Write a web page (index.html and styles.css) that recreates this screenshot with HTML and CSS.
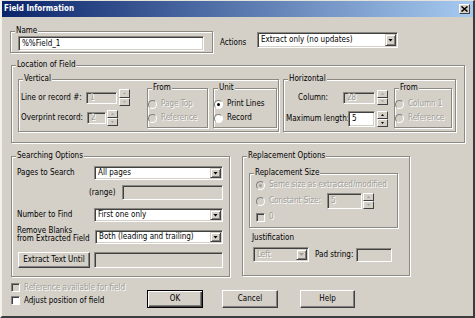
FILE: index.html
```html
<!DOCTYPE html>
<html>
<head>
<meta charset="utf-8">
<link rel="stylesheet" href="styles.css">
</head>
<body>
<div class="window">
  <div class="titlebar">
    <span class="title">Field Information</span>
    <span class="xbtn"><svg width="7" height="6" viewBox="0 0 7 6"><path d="M0.5 0.5L6.5 5.5M6.5 0.5L0.5 5.5" stroke="#000" stroke-width="1.5"/></svg></span>
  </div>
  <div class="client">
    <div class="row-top">
      <div class="grp g-name">
        <span class="cap">Name</span>
        <div class="edit e-name">%%Field_1</div>
      </div>
      <div class="actions">
        <span class="l-actions">Actions</span>
        <div class="combo c-actions"><span class="ctext">Extract only (no updates)</span><span class="dd"><i class="tri"></i></span></div>
      </div>
    </div>

    <div class="grp g-loc">
      <span class="cap">Location of Field</span>
      <div class="grp g-vert">
        <span class="cap">Vertical</span>
        <div class="vcol">
          <div class="frow va">
            <span class="lbl w65">Line or record #:</span>
            <div class="edit dis w31">1</div>
            <div class="spin ml2"><span><i class="up dis"></i></span><span><i class="dn dis"></i></span></div>
          </div>
          <div class="frow vb">
            <span class="lbl w66">Overprint record:</span>
            <div class="edit dis w19">2</div>
            <div class="spin ml1"><span><i class="up dis"></i></span><span><i class="dn dis"></i></span></div>
          </div>
        </div>
        <div class="grp g-from-v">
          <span class="cap">From</span>
          <div class="radio r1 dtext"><span class="rb off"></span>Page Top</div>
          <div class="radio r2 dtext"><span class="rb off"></span>Reference</div>
        </div>
        <div class="grp g-unit">
          <span class="cap">Unit</span>
          <div class="radio r1"><span class="rb"><i class="dot"></i></span>Print Lines</div>
          <div class="radio r2"><span class="rb"></span>Record</div>
        </div>
      </div>
      <div class="grp g-horiz">
        <span class="cap">Horizontal</span>
        <div class="hcol">
          <div class="frow ha">
            <span class="lbl l-col">Column:</span>
            <div class="edit dis w32">28</div>
            <div class="spin ml2"><span><i class="up dis"></i></span><span><i class="dn dis"></i></span></div>
          </div>
          <div class="frow hb">
            <span class="lbl l-max">Maximum length:</span>
            <div class="edit w27">5</div>
            <div class="spin ml2"><span><i class="up"></i></span><span><i class="dn"></i></span></div>
          </div>
        </div>
        <div class="grp g-from-h">
          <span class="cap">From</span>
          <div class="radio r1 dtext"><span class="rb off"></span>Column 1</div>
          <div class="radio r2 dtext"><span class="rb off"></span>Reference</div>
        </div>
      </div>
    </div>

    <div class="row-bot">
      <div class="grp g-search">
        <span class="cap">Searching Options</span>
        <div class="frow s1">
          <span class="lbl l-s">Pages to Search</span>
          <div class="combo w129"><span class="ctext">All pages</span><span class="dd"><i class="tri"></i></span></div>
        </div>
        <div class="frow s2">
          <span class="lbl l-range">(range)</span>
          <div class="edit dis w101"></div>
        </div>
        <div class="frow s3">
          <span class="lbl l-s">Number to Find</span>
          <div class="combo w129"><span class="ctext">First one only</span><span class="dd"><i class="tri"></i></span></div>
        </div>
        <div class="frow s4">
          <span class="lbl l-blank">Remove Blanks<br>from Extracted Field</span>
          <div class="combo w128"><span class="ctext">Both (leading and trailing)</span><span class="dd"><i class="tri"></i></span></div>
        </div>
        <div class="frow s5">
          <div class="btn b-extract">Extract Text Until</div>
          <div class="edit dis w129 ml4"></div>
        </div>
      </div>

      <div class="grp g-repl">
        <span class="cap">Replacement Options</span>
        <div class="grp g-rsize">
          <span class="cap">Replacement Size</span>
          <div class="radio rr1 dtext"><span class="rb off"><i class="dot gray"></i></span>Same size as extracted/modified</div>
          <div class="frow rr2">
            <div class="radio rc dtext"><span class="rb off"></span>Constant Size:</div>
            <div class="edit dis w35">5</div>
            <div class="spin ml1"><span><i class="up dis"></i></span><span><i class="dn dis"></i></span></div>
          </div>
          <div class="radio rr3 dtext"><span class="cb off"></span>0</div>
        </div>
        <div class="l-just">Justification</div>
        <div class="frow jr">
          <div class="combo dis w56"><span class="ctext">Left</span><span class="dd"><i class="tri dis"></i></span></div>
          <span class="lbl l-pad">Pad string:</span>
          <div class="edit dis w36"></div>
        </div>
      </div>
    </div>

    <div class="footer">
      <div class="checks">
        <div class="radio ck1 dtext"><span class="cb off"></span>Reference available for field</div>
        <div class="radio ck2"><span class="cb"></span>Adjust position of field</div>
      </div>
      <div class="btn def b-ok">OK</div>
      <div class="btn b-cancel">Cancel</div>
      <div class="btn b-help">Help</div>
    </div>
  </div>
</div>
</body>
</html>
```

FILE: styles.css
```css
* { box-sizing: border-box; margin: 0; padding: 0; }

body {
  margin: 0;
  font-family: "DejaVu Sans Condensed", "DejaVu Sans", sans-serif;
  font-size: 8px;
  line-height: 10px;
  color: #000;
  background: #d4d0c8;
}

.window {
  width: 475px;
  height: 318px;
  display: flex;
  flex-direction: column;
  background: #d4d0c8;
  border-top: 1px solid #e6e3dc;
  border-left: 2px solid #f3f1ec;
  border-right: 2px solid #3c3c3c;
  border-bottom: 2px solid #3c3c3c;
}

.titlebar {
  height: 16px;
  flex: none;
  display: flex;
  align-items: center;
  justify-content: space-between;
  padding: 0 3px 0 2px;
  background: linear-gradient(90deg, #0a246a, #a6caf0);
}

.title { color: #fff; font-weight: bold; font-size: 8px; }

.xbtn {
  width: 11px;
  height: 10px;
  display: flex;
  align-items: center;
  justify-content: center;
  background: #d4d0c8;
  border: 1px solid;
  border-color: #fff #404040 #404040 #fff;
}

.client { flex: 1; display: flex; flex-direction: column; align-items: flex-start; }

/* group boxes */
.grp {
  position: relative;
  flex: none;
  border: 1px solid #8c8983;
  box-shadow: inset 1px 1px 0 #fff, 1px 1px 0 #fff;
}
.cap {
  position: absolute;
  top: -6px;
  left: 4px;
  padding: 0 1px;
  background: #d4d0c8;
  white-space: nowrap;
  line-height: 10px;
}

/* controls */
.edit {
  flex: none;
  display: flex;
  align-items: center;
  padding-left: 3px;
  white-space: nowrap;
  overflow: hidden;
  background: #fff;
  border: 1px solid;
  border-color: #8c8983 #fff #fff #8c8983;
  box-shadow: inset 1px 1px 0 #404040, inset -1px -1px 0 #d4d0c8;
}
.edit.dis { background: #d4d0c8; color: #a19e98; text-shadow: 1px 1px 0 #fff; }

.combo {
  flex: none;
  display: flex;
  padding: 1px;
  background: #fff;
  border: 1px solid;
  border-color: #8c8983 #fff #fff #8c8983;
  box-shadow: inset 1px 1px 0 #404040, inset -1px -1px 0 #d4d0c8;
}
.combo.dis { background: #d4d0c8; color: #a19e98; text-shadow: 1px 1px 0 #fff; }
.ctext { flex: 1; display: flex; align-items: center; padding-left: 2px; white-space: nowrap; overflow: hidden; }
.dd {
  width: 11px;
  flex: none;
  display: flex;
  align-items: center;
  justify-content: center;
  background: #d4d0c8;
  border: 1px solid;
  border-color: #d4d0c8 #404040 #404040 #d4d0c8;
  box-shadow: inset 1px 1px 0 #fff, inset -1px -1px 0 #808080;
}
.tri { width: 5px; height: 3px; background: #000; clip-path: polygon(0 0, 100% 0, 50% 100%); }
.tri.dis { background: #a19e98; }

.spin { flex: none; width: 11px; align-self: stretch; display: flex; flex-direction: column; }
.spin > span {
  flex: 1;
  display: flex;
  align-items: center;
  justify-content: center;
  background: #d4d0c8;
  border: 1px solid;
  border-color: #fff #404040 #404040 #fff;
}
.up, .dn { width: 3px; height: 2px; background: #000; }
.up { clip-path: polygon(50% 0, 100% 100%, 0 100%); }
.dn { clip-path: polygon(0 0, 100% 0, 50% 100%); }
.up.dis, .dn.dis { background: #a19e98; }

.radio { display: flex; align-items: center; white-space: nowrap; }
.rb {
  width: 9px;
  height: 9px;
  flex: none;
  margin-right: 4px;
  border-radius: 50%;
  display: flex;
  align-items: center;
  justify-content: center;
  background: #fff;
  border: 1px solid;
  border-color: #808080 #fff #fff #808080;
}
.rb.off { background: #d4d0c8; }
.dot { width: 3px; height: 3px; border-radius: 50%; background: #000; }
.dot.gray { background: #a19e98; }
.cb {
  width: 9px;
  height: 9px;
  flex: none;
  margin-right: 4px;
  background: #fff;
  border: 1px solid;
  border-color: #808080 #fff #fff #808080;
  box-shadow: inset 1px 1px 0 #404040;
}
.cb.off { background: #d4d0c8; }
.dtext { color: #a19e98; text-shadow: 1px 1px 0 #fff; }

.btn {
  flex: none;
  display: flex;
  align-items: center;
  justify-content: center;
  white-space: nowrap;
  background: #d4d0c8;
  border: 1px solid;
  border-color: #fff #404040 #404040 #fff;
  box-shadow: inset -1px -1px 0 #808080;
}
.btn.def {
  border-color: #000;
  box-shadow: inset 1px 1px 0 #fff, inset -1px -1px 0 #404040, inset -2px -2px 0 #808080;
}

.frow { display: flex; align-items: center; }
.lbl { flex: none; white-space: nowrap; }

/* widths */
.w19 { width: 19px; } .w27 { width: 27px; } .w31 { width: 31px; } .w32 { width: 32px; }
.w35 { width: 35px; } .w36 { width: 36px; } .w56 { width: 56px; } .w65 { width: 65px; }
.w66 { width: 66px; } .w101 { width: 101px; } .w128 { width: 128px; } .w129 { width: 129px; }
.ml1 { margin-left: 1px; } .ml2 { margin-left: 2px; } .ml4 { margin-left: 4px; }

/* top row */
.row-top { display: flex; align-items: flex-start; margin: 14px 0 0 8px; }
.g-name { width: 203px; height: 22px; }
.e-name { width: 186px; height: 15px; margin: 4px 0 0 7px; }
.actions { display: flex; align-items: flex-start; margin: 1px 0 0 7px; }
.l-actions { width: 37px; margin-top: 6px; }
.c-actions { width: 141px; height: 16px; }

/* location */
.g-loc { width: 454px; height: 78px; margin: 12px 0 0 9px; display: flex; align-items: flex-start; gap: 4px; padding: 13px 0 0 6px; }
.g-vert { width: 261px; height: 53px; display: flex; align-items: flex-start; }
.vcol { width: 128px; padding-left: 2px; }
.va { margin-top: 9px; height: 17px; }
.vb { margin-top: 4px; height: 16px; }
.g-from-v { width: 61px; height: 40px; margin-top: 8px; }
.g-unit { width: 64px; height: 40px; margin: 8px 0 0 5px; }
.r1 { margin-top: 10px; height: 10px; }
.r2 { margin-top: 4px; height: 10px; }

.g-horiz { width: 173px; height: 53px; display: flex; align-items: flex-start; }
.hcol { width: 110px; }
.ha { margin-top: 10px; height: 15px; }
.hb { margin-top: 6px; height: 16px; }
.l-col { margin-left: 14px; width: 45px; }
.l-max { margin-left: 2px; width: 62px; }
.w27 { height: 16px; }
.g-from-h { width: 58px; height: 40px; margin-top: 8px; }

/* bottom groups */
.row-bot { display: flex; align-items: flex-start; margin: 13px 0 0 9px; }
.g-search { width: 219px; height: 121px; }
.l-s { width: 82px; padding-left: 5px; }
.s1 { margin-top: 9px; height: 14px; }
.s1 .combo, .s3 .combo, .s4 .combo { height: 14px; }
.s2 { margin-top: 5px; height: 15px; }
.s2 .edit { height: 15px; }
.l-range { margin-left: 77px; width: 33px; }
.s3 { margin-top: 8px; height: 14px; }
.s4 { margin-top: 8px; height: 14px; }
.l-blank { width: 83px; padding-left: 5px; align-self: flex-start; margin-top: -3px; line-height: 8px; }
.s5 { margin-top: 8px; height: 16px; }
.s5 .edit { height: 16px; }
.b-extract { width: 72px; height: 16px; margin-left: 6px; }

.g-repl { width: 168px; height: 120px; margin-left: 12px; }
.g-rsize { width: 149px; height: 55px; margin: 16px 0 0 6px; }
.rr1 { margin-top: 6px; height: 10px; padding-left: 6px; }
.rr2 { margin-top: 3px; height: 16px; padding-left: 6px; }
.rc { width: 71px; }
.w35 { height: 16px; }
.rr3 { margin-top: 3px; height: 10px; padding-left: 6px; }
.l-just { margin: 5px 0 0 9px; }
.jr { margin-top: 4px; }
.jr .combo { margin-left: 10px; height: 15px; }
.l-pad { margin-left: 6px; width: 41px; }
.w36 { height: 14px; }

/* footer */
.footer { display: flex; align-items: flex-start; margin-left: 9px; }
.checks { width: 136px; }
.ck1 { margin-top: 6px; height: 9px; }
.ck2 { margin-top: 4px; height: 9px; }
.b-ok { width: 56px; height: 18px; margin-top: 13px; }
.b-cancel { width: 56px; height: 18px; margin: 13px 0 0 19px; }
.b-help { width: 55px; height: 18px; margin: 13px 0 0 22px; }
```
